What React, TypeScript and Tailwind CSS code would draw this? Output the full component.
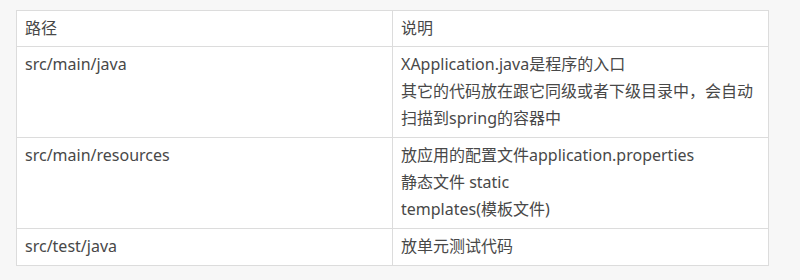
const rows: { path: string; desc: string[] }[] = [
  {
    path: "src/main/java",
    desc: [
      "XApplication.java是程序的入口",
      "其它的代码放在跟它同级或者下级目录中，会自动",
      "扫描到spring的容器中",
    ],
  },
  {
    path: "src/main/resources",
    desc: ["放应用的配置文件application.properties", "静态文件 static", "templates(模板文件)"],
  },
  { path: "src/test/java", desc: ["放单元测试代码"] },
];

export default function App() {
  return (
    <div
      className="w-[800px] h-[280px] bg-[#f7f7f7] pt-[10px] pl-[16px] text-[16px] leading-[27px] text-[#484848]"
      style={{ fontFamily: '"Noto Sans", "Noto Sans CJK SC", sans-serif' }}
    >
      <table className="w-[752px] bg-white border-collapse border border-[#dcdcdc] table-fixed">
        <colgroup>
          <col className="w-[376px]" />
          <col className="w-[376px]" />
        </colgroup>
        <thead>
          <tr>
            <th className="border border-[#dcdcdc] text-left font-normal align-top pl-[8px] pt-[4px] pb-[4px] h-[36px]">
              路径
            </th>
            <th className="border border-[#dcdcdc] text-left font-normal align-top pl-[8px] pt-[4px] pb-[4px]">
              说明
            </th>
          </tr>
        </thead>
        <tbody>
          {rows.map((r) => (
            <tr key={r.path}>
              <td className="border border-[#dcdcdc] align-top pl-[8px] pt-[4px] pb-[5px]">{r.path}</td>
              <td className="border border-[#dcdcdc] align-top pl-[8px] pt-[4px] pb-[5px]">
                {r.desc.map((d) => (
                  <div key={d} className="whitespace-nowrap">
                    {d}
                  </div>
                ))}
              </td>
            </tr>
          ))}
        </tbody>
      </table>
    </div>
  );
}
